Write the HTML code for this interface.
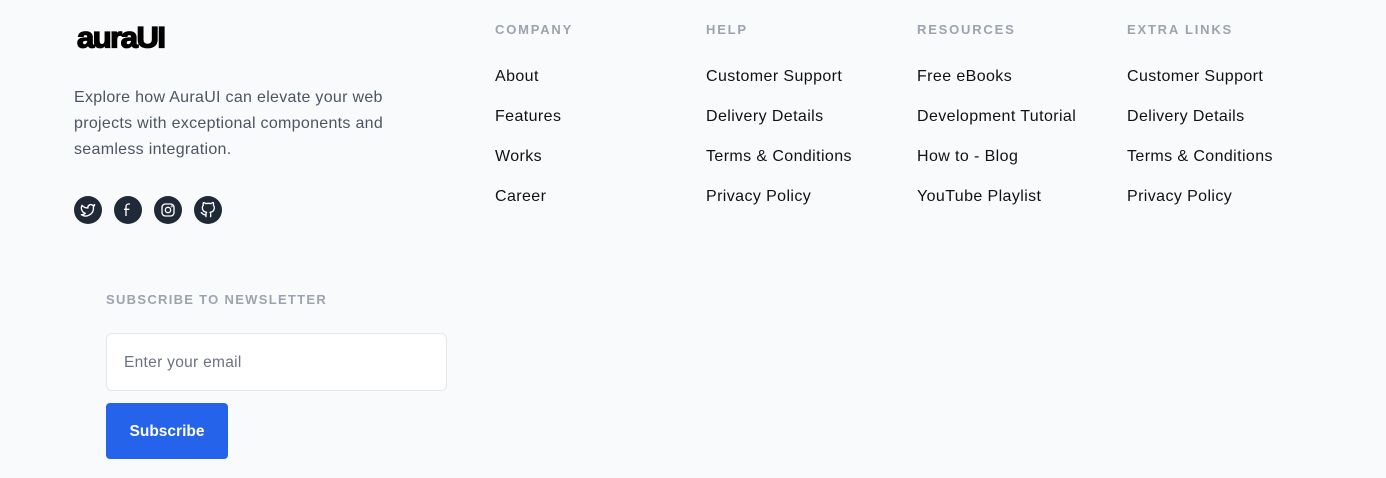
<!DOCTYPE html>
<html><head><style>
*{margin:0;padding:0;box-sizing:border-box}
body{width:1386px;height:478px;background:#f9fafb;font-family:"Liberation Sans",sans-serif;position:relative;overflow:hidden}
.abs{position:absolute}
.logo{left:77px;top:20px;font-size:31px;font-weight:900;letter-spacing:-1.5px;color:#000;transform:scaleY(0.95);-webkit-text-stroke:1.4px #000}
.desc{left:74px;top:85px;width:360px;font-size:16px;letter-spacing:0.3px;line-height:26px;color:#4b5563}
.ic{top:196px;width:28px;height:28px;border-radius:50%;background:#1f2937;display:flex;align-items:center;justify-content:center}
.h{font-size:13px;font-weight:700;letter-spacing:1.8px;color:#9ca3af}
.col{top:22px}
.col a{display:block;font-size:16px;letter-spacing:0.4px;color:#111;text-decoration:none;height:40px}
.col .h{margin-bottom:31px}
</style></head><body>
<div class="abs logo">auraUI</div>
<div class="abs desc">Explore how AuraUI can elevate your web projects with exceptional components and seamless integration.</div>
<div class="abs ic" style="left:74px"><svg width="16" height="16" viewBox="0 0 24 24" fill="none" stroke="#fff" stroke-width="2" stroke-linejoin="round"><path d="M22 4s-.7 2.1-2 3.4c1.6 10-9.4 17.3-18 11.6 2.2.1 4.4-.6 6-2C3 15.5.5 9.6 3 5c2.2 2.6 5.6 4.1 9 4-.9-4.2 4-6.6 7-3.8 1.1 0 3-1.2 3-1.2z"/></svg></div>
<div class="abs ic" style="left:114px"><svg width="16" height="16" viewBox="0 0 24 24" fill="none" stroke="#fff" stroke-width="2"><path d="M15 3h-2a4 4 0 0 0-4 4v14M6 11h8"/></svg></div>
<div class="abs ic" style="left:154px"><svg width="16" height="16" viewBox="0 0 24 24" fill="none" stroke="#fff" stroke-width="2"><rect x="3" y="3" width="18" height="18" rx="5"/><circle cx="12" cy="12" r="4"/><circle cx="17.5" cy="6.5" r=".5"/></svg></div>
<div class="abs ic" style="left:194px"><svg width="16" height="16" viewBox="0 0 24 24" fill="none" stroke="#fff" stroke-width="2" stroke-linecap="round" stroke-linejoin="round"><path d="M9 19c-5 1.5-5-2.5-7-3m14 6v-3.9a3.4 3.4 0 0 0-.9-2.6c3.1-.4 6.4-1.5 6.4-7A5.4 5.4 0 0 0 20 4.8 5 5 0 0 0 19.9 1S18.7.6 16 2.5a13.4 13.4 0 0 0-7 0C6.3.6 5.1 1 5.1 1A5 5 0 0 0 5 4.8a5.4 5.4 0 0 0-1.5 3.7c0 5.4 3.3 6.6 6.4 7a3.4 3.4 0 0 0-.9 2.5V22"/></svg></div>
<div class="abs col" style="left:495px"><div class="h">COMPANY</div><a>About</a><a>Features</a><a>Works</a><a>Career</a></div>
<div class="abs col" style="left:706px"><div class="h">HELP</div><a>Customer Support</a><a>Delivery Details</a><a>Terms &amp; Conditions</a><a>Privacy Policy</a></div>
<div class="abs col" style="left:917px"><div class="h">RESOURCES</div><a>Free eBooks</a><a>Development Tutorial</a><a>How to - Blog</a><a>YouTube Playlist</a></div>
<div class="abs col" style="left:1127px"><div class="h">EXTRA LINKS</div><a>Customer Support</a><a>Delivery Details</a><a>Terms &amp; Conditions</a><a>Privacy Policy</a></div>
<div class="abs h" style="left:106px;top:292px;letter-spacing:1.3px">SUBSCRIBE TO NEWSLETTER</div>
<div class="abs" style="left:106px;top:333px;width:341px;height:58px;background:#fff;border:1px solid #e5e7eb;border-radius:6px;padding-left:17px;line-height:58px;font-size:15.5px;letter-spacing:0.3px;color:#6b7280">Enter your email</div>
<div class="abs" style="left:106px;top:403px;width:122px;height:56px;background:#2563eb;border-radius:4px;color:#fff;font-weight:700;font-size:15.5px;text-align:center;line-height:58px">Subscribe</div>
</body></html>
